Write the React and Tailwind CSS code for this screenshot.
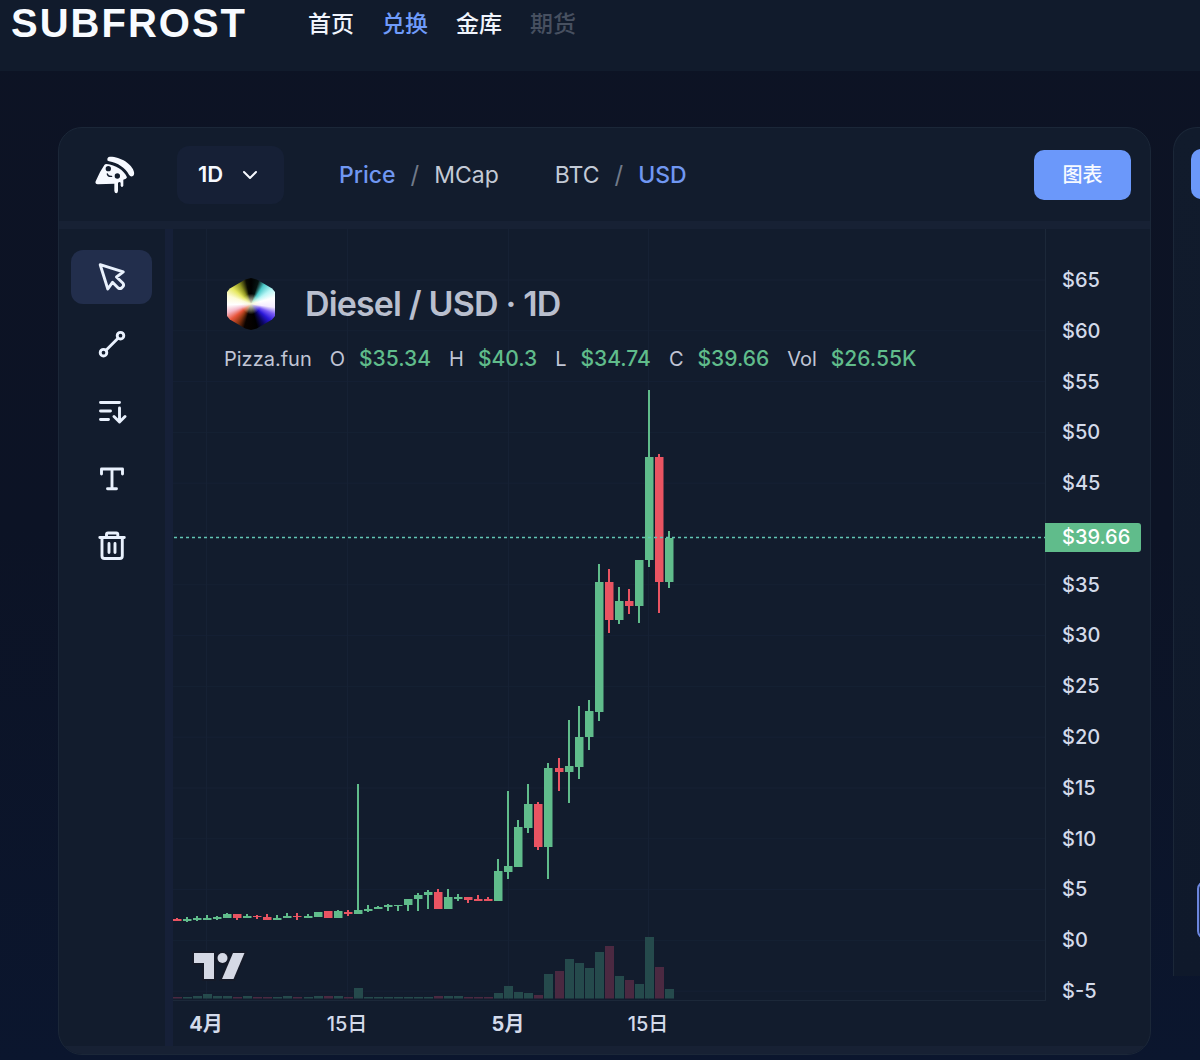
import { useState } from 'react';
import { ChevronDown } from 'lucide-react';

const NAV = [
  { label: '首页', color: 'text-[#f1f5fd]' },
  { label: '兑换', color: 'text-[#6f9bfa]' },
  { label: '金库', color: 'text-[#f1f5fd]' },
  { label: '期货', color: 'text-[#475060]' },
];

const PRICES = ['$65', '$60', '$55', '$50', '$45', '', '$35', '$30', '$25', '$20', '$15', '$10', '$5', '$0', '$-5'];

const TICKS = [
  { x: 33, label: '4月', bold: true },
  { x: 174, label: '15日' },
  { x: 335, label: '5月', bold: true },
  { x: 475, label: '15日' },
];

const STATS = [
  ['O', '$35.34'],
  ['H', '$40.3'],
  ['L', '$34.74'],
  ['C', '$39.66'],
  ['Vol', '$26.55K'],
];

// [up, body top, body bottom, wick top, wick bottom, volume]
const CANDLES = [
  [0, 690, 692, 689, 692, 1], [1, 690, 692, 688, 693, 1], [1, 689, 691, 687, 692, 2], [1, 689, 691, 686, 691, 4],
  [1, 688, 690, 687, 691, 2], [1, 685, 689, 684, 689, 2], [0, 685, 689, 685, 691, 1], [1, 687, 689, 685, 689, 2],
  [0, 687, 688, 686, 690, 1], [0, 688, 691, 685, 691, 1], [1, 689, 691, 686, 691, 1], [1, 687, 689, 684, 689, 2],
  [0, 687, 688, 684, 691, 1], [1, 687, 689, 685, 689, 1], [1, 683, 688, 683, 688, 2], [0, 682, 689, 682, 689, 2],
  [1, 682, 689, 681, 689, 2], [0, 683, 685, 681, 687, 1], [1, 681, 685, 555, 685, 10], [1, 680, 682, 676, 683, 1],
  [1, 678, 680, 677, 680, 1], [1, 676, 678, 675, 682, 1], [1, 676, 677, 676, 682, 1], [1, 670, 676, 670, 682, 1],
  [1, 666, 670, 664, 682, 1], [1, 663, 666, 661, 680, 1], [0, 663, 680, 660, 680, 2], [1, 668, 680, 660, 680, 2],
  [1, 668, 670, 665, 672, 2], [0, 668, 671, 668, 674, 1], [0, 670, 672, 666, 672, 1], [0, 670, 672, 668, 672, 1],
  [1, 642, 672, 630, 672, 5], [1, 637, 643, 562, 650, 12], [1, 598, 638, 591, 638, 6], [1, 575, 599, 555, 604, 5],
  [0, 575, 618, 573, 621, 3], [1, 539, 618, 534, 650, 24], [0, 539, 543, 529, 562, 27], [1, 537, 543, 491, 574, 39],
  [1, 508, 538, 477, 550, 35], [1, 482, 508, 471, 521, 30], [1, 353, 483, 335, 492, 46], [0, 353, 391, 340, 404, 52],
  [1, 372, 391, 358, 395, 22], [0, 372, 377, 360, 385, 18], [1, 331, 377, 331, 394, 14], [1, 228, 331, 161, 338, 61],
  [0, 228, 353, 225, 384, 31], [1, 309, 353, 302, 359, 9],
];

const PLOT_H = 771;
const STEP = 10.04;

function PizzaLogo() {
  return (
    <svg viewBox="136 107 120 114" className="h-[38px] w-10" fill="#f6f9ff" aria-label="Pizza.fun">
      <path d="M180 109C210 108 248 130 253 155Q255 165 248 168Q242 170 238 163C226 142 205 128 178 123Q171 121 173 115Q175 109 180 109Z" />
      <path d="M170 131C198 134 222 148 232 171Q231 176 221 178V196Q217 204 213 196V187Q209 182 205 188V212Q204 219 200 219Q195 219 194 212V190L144 192Q135 191 138 183Q150 154 164 134Q166 131 170 131Z" />
      <g fill="#121c2d">
        <circle cx="176" cy="145" r="8" />
        <circle cx="203" cy="167" r="8" />
      </g>
      <path d="M173 161Q175 169 186 168" fill="none" stroke="#121c2d" strokeWidth="4" strokeLinecap="round" />
    </svg>
  );
}

const TOOLS = [
  { name: 'Cursor', icon: <path d="M3.2 2.7L26.3 9.8L19.5 15L26 21.3Q27.3 23 25.8 24.8L24.6 26Q23 27.2 21.2 26L15.5 20.3L10.8 27Z" /> },
  { name: 'Trend line', icon: <><circle cx="23.5" cy="6.7" r="3.3" /><circle cx="6.5" cy="23.7" r="3.3" /><path d="M21 9.2L9 21.2" /></> },
  { name: 'Sort', icon: <path d="M3.5 6.5H22.5M3.5 15H13.5M3.5 23.5H11.5M22.5 12V25.5M17 20.5L22.5 26L28 20.5" /> },
  { name: 'Text', icon: <path d="M4.5 11V6H25.5V11M15 6V25.7M10.5 25.7H19.5" /> },
  { name: 'Delete', icon: <path d="M2.8 7.5H27.3M9.5 7V4.5Q9.5 3 11 3H19.3Q20.8 3 20.8 4.5V7M5 8V26Q5 28.5 7.5 28.5H22.8Q25.3 28.5 25.3 26V8M12 13.5V22.5M18 13.5V22.5" /> },
];

function Toolbar() {
  const [active, setActive] = useState('Cursor');
  return (
    <div className="flex w-[106px] shrink-0 flex-col items-start gap-[13px] pl-3 pt-[21px]">
      {TOOLS.map(t => (
        <button key={t.name} aria-label={t.name} onClick={() => setActive(t.name)}
          className={`flex h-[54px] w-[81px] items-center justify-center rounded-xl ${active === t.name ? 'bg-[#222e4c]' : ''}`}>
          <svg viewBox="0 0 30 30" className="size-[30px]" fill="none" stroke="#e9f1fd" strokeWidth="2.9" strokeLinecap="round" strokeLinejoin="round">{t.icon}</svg>
        </button>
      ))}
    </div>
  );
}

function Toggle({ options, value, onChange }) {
  return (
    <div className="flex items-center gap-[15px] text-[23px] leading-7">
      {options.map((o, i) => (
        <div key={o} className="flex items-center gap-[15px]">
          {i > 0 && <span className="text-2xl text-[#717a8a]">/</span>}
          <button onClick={() => onChange(o)} className={value === o ? 'font-medium text-[#7097f2]' : 'text-[#c3cad6]'}>{o}</button>
        </div>
      ))}
    </div>
  );
}

function CandleChart() {
  return (
    <svg className="block h-[817px] w-full" role="img" aria-label="Diesel / USD">
      <g stroke="#162134">
        {PRICES.map((p, i) => <line key={i} x1="0" x2="100%" y1={51 + i * 50.8} y2={51 + i * 50.8} />)}
        {TICKS.map(t => <line key={t.x} x1={t.x + 0.5} x2={t.x + 0.5} y1="0" y2={PLOT_H} />)}
      </g>
      <line x1="0" x2="100%" y1={PLOT_H + 0.5} y2={PLOT_H + 0.5} stroke="#1c2839" />
      {CANDLES.map(([up, top, bottom, high, low, vol], i) => {
        const x = Math.round(i * STEP);
        return (
          <g key={i} fill={up ? '#60bc8b' : '#e95462'}>
            <rect x={x} y={769 - vol} width="9" height={vol + 0.5} fill={up ? '#254a4c' : '#4b2941'} />
            <rect x={x + 3} y={high} width="2" height={low - high} />
            <rect x={x} y={top} width="8.5" height={bottom - top} />
          </g>
        );
      })}
      <line x1="1" x2="100%" y1="308.5" y2="308.5" stroke="#62c5b5" strokeWidth="1.5" strokeDasharray="3 3" />
      <g fill="#d5d9e5" stroke="#151a28" strokeWidth="4" paintOrder="stroke">
        <path d="M21 724H41V750H31V734H21Z" />
        <circle cx="49.5" cy="729" r="5" />
        <path d="M60 724H71.5L60.5 750H49Z" />
      </g>
      {TICKS.map(t => (
        <text key={t.x} x={t.x} y="802" textAnchor="middle" fill="#d3daea" className={t.bold ? 'text-[20px] font-bold' : 'text-[20px] font-medium'}>{t.label}</text>
      ))}
    </svg>
  );
}

function ChartLegend() {
  return (
    <div className="absolute left-[51px] top-[49px]">
      <div className="flex items-center gap-[30px] pl-[3px]">
        <div className="h-[52px] w-12 bg-[radial-gradient(ellipse_at_center,#f6f6d8_0,#f6f6d800_28%),conic-gradient(#000_0deg,#061210_18deg,#49c8c8_34deg,#b8f6f6_55deg,#fff_75deg,#f4ecff_98deg,#7a5cf5_114deg,#2a18d8_130deg,#0b0660_148deg,#000_165deg,#0a0300_196deg,#8a3410_214deg,#e8553a_232deg,#f4b8c8_250deg,#fff_268deg,#fdfbd8_290deg,#e6e860_310deg,#8f9420_330deg,#0a0a02_348deg,#000_360deg)] [clip-path:polygon(50%_0,62%_3%,94%_20%,100%_27%,100%_73%,94%_80%,62%_97%,50%_100%,38%_97%,6%_80%,0_73%,0_27%,6%_20%,38%_3%)]" />
        <h1 className="text-[34px] font-semibold leading-[52px] tracking-tight text-[#b9bfce]">Diesel / USD · 1D</h1>
      </div>
      <div className="mt-[15px] flex gap-[18px] whitespace-nowrap text-[20px] leading-7 text-[#c0c5d5]">
        <span>Pizza.fun</span>
        {STATS.map(([k, v]) => (
          <div key={k} className="flex gap-[14px]">
            <span>{k}</span>
            <span className="text-[21px] font-medium text-[#60bc8b]">{v}</span>
          </div>
        ))}
      </div>
    </div>
  );
}

function PriceAxis() {
  return (
    <div className="relative flex h-[817px] w-[105px] shrink-0 flex-col">
      <div className="flex h-[772px] flex-col border-l border-[#1c2839] pl-4 pt-[39px]">
        <div className="flex h-[735px] shrink-0 flex-col justify-between text-[20px] font-medium leading-6 text-[#d3daea]">
          {PRICES.map((p, i) => <span key={i} className="h-6">{p}</span>)}
        </div>
      </div>
      <div className="absolute left-0 top-[294px] h-[29px] w-24 rounded-r-[3px] bg-[#60bc8b] pl-[17px] text-[20px] font-medium leading-[29px] text-white">$39.66</div>
    </div>
  );
}

export default function App() {
  const [metric, setMetric] = useState('Price');
  const [quote, setQuote] = useState('USD');

  return (
    <div className="flex min-h-screen flex-col overflow-hidden bg-[linear-gradient(to_bottom,#0d1324_0,#0c1325_50%,#0b162e_100%)] font-['Inter','Noto_Sans_CJK_SC',sans-serif]">
      <header className="flex h-[71px] items-start gap-[61px] bg-[#111b2c] pl-[11px]">
        <a href="#" className="font-['Liberation_Sans',sans-serif] text-[40px] font-bold leading-[46px] tracking-wider text-[#f8fbff]">SUBFROST</a>
        <nav className="flex gap-7 pt-2 text-[23px] font-medium leading-8">
          {NAV.map(n => <a key={n.label} href="#" className={n.color}>{n.label}</a>)}
        </nav>
      </header>

      <main className="flex flex-1 items-start gap-[22px] pb-[5px] pl-[58px] pt-14">
        <section className="min-w-0 flex-1 overflow-hidden rounded-3xl border border-[#1b2738] bg-[#121c2d]">
          <div className="flex h-[93px] items-center pl-[36px] pr-[19px]">
            <PizzaLogo />
            <div className="relative ml-[42px]">
              <select aria-label="Interval" className="h-[58px] w-[107px] appearance-none rounded-xl bg-[#162036] pl-[21px] text-[22px] font-semibold text-[#f6f9ff]">
                <option>1D</option>
                <option>1W</option>
              </select>
              <ChevronDown className="pointer-events-none absolute right-[22px] top-[17px] size-6 text-[#f6f9ff]" strokeWidth={2} />
            </div>
            <div className="ml-[55px] flex flex-1 gap-14">
              <Toggle options={['Price', 'MCap']} value={metric} onChange={setMetric} />
              <Toggle options={['BTC', 'USD']} value={quote} onChange={setQuote} />
            </div>
            <button className="h-[50px] w-[97px] rounded-[10px] bg-[#6b98fa] text-[20px] font-medium text-[#f8fbff]">图表</button>
          </div>
          <div className="flex border-y-8 border-[#172134]">
            <Toolbar />
            <div className="w-2 shrink-0 bg-[#162038]" />
            <div className="relative min-w-0 flex-1">
              <CandleChart />
              <ChartLegend />
            </div>
            <PriceAxis />
          </div>
        </section>

        <aside className="h-[849px] w-[27px] shrink-0 overflow-hidden rounded-tl-3xl border-l border-t border-[#1b2738] bg-[linear-gradient(to_bottom,#111b2c,#0f192b)] pl-[17px] pt-[21px]">
          <button aria-label="Swap" className="block h-[50px] w-24 rounded-[10px] bg-[#6b98fa]" />
          <button aria-label="Max" className="ml-[6px] mt-[682px] block h-[58px] w-24 rounded-lg border-2 border-[#6b86dd] bg-[#1b2950]" />
        </aside>
      </main>
    </div>
  );
}
